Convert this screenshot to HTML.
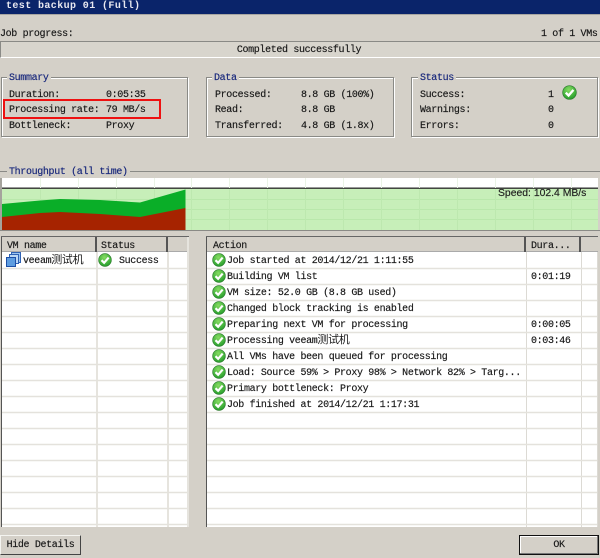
<!DOCTYPE html>
<html><head><meta charset="utf-8">
<style>
html,body{margin:0;padding:0;width:600px;height:558px;overflow:hidden;background:#d4d0c8}
#p{position:absolute;left:0;top:0;width:600px;height:558px;overflow:hidden;background:#d4d0c8;font-family:"Liberation Mono","Noto Sans CJK SC",monospace;font-size:10px;letter-spacing:-.35px;color:#161616;-webkit-text-stroke:.15px #161616}
#p div{position:absolute;box-sizing:border-box}
.t{white-space:nowrap;line-height:12px;height:12px}
.l{color:#14247a;background:#d4d0c8;padding:0 2px;-webkit-text-stroke:.15px #14247a}
.g{border:1px solid #8a8a86;box-shadow:1px 1px 0 #fff, inset 1px 1px 0 #fff}
.c{font-size:11px;line-height:0;font-family:"Noto Sans CJK SC","Liberation Sans",sans-serif;-webkit-text-stroke:0}
.h{background:#e6e4de}
svg{position:absolute}
.b{background:#d4d0c8;text-align:center;line-height:12px;padding-top:4px}
</style></head><body>
<div id="p">
<svg width="0" height="0" style="left:0;top:0"><defs>
<radialGradient id="gr" cx="45%" cy="30%" r="75%"><stop offset="0" stop-color="#86dc62"/><stop offset="1" stop-color="#1f9a28"/></radialGradient>
<symbol id="k" viewBox="0 0 16 16"><circle cx="8" cy="8" r="7.3" fill="url(#gr)" stroke="#2d7a2d" stroke-width=".7"/><path d="M4 8.2L7 11.2L12.2 5.2" fill="none" stroke="#fff" stroke-width="2.500"/></symbol>
</defs></svg>

<div style="left:0;top:0;width:600px;height:14px;background:#0a246a"></div>
<div style="left:0;top:14px;width:600px;height:1px;background:#a8a6a2"></div>
<div class="t" style="left:6px;top:0px;color:#e8e8f0;font-weight:bold;letter-spacing:.4px;-webkit-text-stroke:0;top:1px">test backup 01 (Full)</div>

<div class="t" style="left:0;top:29px">Job progress:</div>
<div class="t" style="left:541px;top:29px">1 of 1 VMs</div>
<div style="left:0;top:41px;width:600px;height:17px;background:#d8d5cd;border-top:1px solid #8a8a86;border-left:1px solid #8a8a86;border-bottom:1px solid #fff"></div>
<div class="t" style="left:0;top:45px;width:598px;text-align:center">Completed successfully</div>

<div class="g" style="left:1px;top:77px;width:187px;height:60px"></div>
<div class="t l" style="left:7px;top:73px">Summary</div>
<div class="t" style="left:9px;top:90px">Duration:</div><div class="t" style="left:106px;top:90px">0:05:35</div>
<div class="t" style="left:9px;top:105px">Processing rate:</div><div class="t" style="left:106px;top:105px">79 MB/s</div>
<div class="t" style="left:9px;top:121px">Bottleneck:</div><div class="t" style="left:106px;top:121px">Proxy</div>
<div style="left:3px;top:99px;width:158px;height:20px;border:2px solid #ee1111"></div>

<div class="g" style="left:206px;top:77px;width:188px;height:60px"></div>
<div class="t l" style="left:212px;top:73px">Data</div>
<div class="t" style="left:215px;top:90px">Processed:</div><div class="t" style="left:301px;top:90px">8.8 GB (100%)</div>
<div class="t" style="left:215px;top:105px">Read:</div><div class="t" style="left:301px;top:105px">8.8 GB</div>
<div class="t" style="left:215px;top:121px">Transferred:</div><div class="t" style="left:301px;top:121px">4.8 GB (1.8x)</div>

<div class="g" style="left:411px;top:77px;width:187px;height:60px"></div>
<div class="t l" style="left:418px;top:73px">Status</div>
<div class="t" style="left:420px;top:90px">Success:</div><div class="t" style="left:548px;top:90px">1</div>
<div class="t" style="left:420px;top:105px">Warnings:</div><div class="t" style="left:548px;top:105px">0</div>
<div class="t" style="left:420px;top:121px">Errors:</div><div class="t" style="left:548px;top:121px">0</div>
<svg style="left:562px;top:85px" width="15" height="15"><use href="#k" width="15" height="15"/></svg>

<div style="left:0;top:171px;width:600px;height:1px;background:#8a8a86"></div>
<div class="t l" style="left:7px;top:167px">Throughput (all time)</div>

<svg style="left:0;top:176px" width="600" height="56">
<rect x="0" y="0" width="600" height="56" fill="#d4d0c8"/>
<rect x="2" y="2" width="596" height="10" fill="#fff"/>
<rect x="2" y="12" width="596" height="42" fill="#c7efb9"/>
<rect x="2" y="11.5" width="596" height="1.4" fill="#333"/>
<g stroke="#b9e8ab" stroke-width="1"><path d="M2 23.5H598M2 33.5H598M2 43.5H598"/></g>
<g stroke="#eaf3e6" stroke-width="1"><path d="M40.5 2V12M78.5 2V12M116.5 2V12M154.5 2V12M191.5 2V12M229.5 2V12M267.5 2V12M305.5 2V12M343.5 2V12M381.5 2V12M419.5 2V12M457.5 2V12M495.5 2V12M533.5 2V12M571.5 2V12"/></g>
<g stroke="#bde8af" stroke-width="1"><path d="M40.5 13V54M78.5 13V54M116.5 13V54M154.5 13V54M191.5 13V54M229.5 13V54M267.5 13V54M305.5 13V54M343.5 13V54M381.5 13V54M419.5 13V54M457.5 13V54M495.5 13V54M533.5 13V54M571.5 13V54"/></g>
<path d="M2 28L40 24.5L60 23L100 24L140 26.5L185.500 13.500V54H2Z" fill="#0aae28"/>
<path d="M2 41L40 37L60 36L100 38L140 41L185.500 32V54H2Z" fill="#a62300"/>
<rect x="0" y="54" width="600" height="1" fill="#8a8a86"/>
<rect x="0" y="2" width="2" height="52" fill="#a5a39d"/>
</svg>
<div style="left:498px;top:187px;font:10.4px/13px 'Liberation Sans',sans-serif;letter-spacing:0;color:#222;white-space:nowrap">Speed: 102.4 MB/s</div>

<!-- left table -->
<div style="left:1px;top:236px;width:188px;height:291px;background:#fff"></div>
<div style="left:1px;top:236px;width:1px;height:291px;background:#555"></div>
<div style="left:1px;top:236px;width:188px;height:1px;background:#666"></div>
<div style="left:2px;top:237px;width:187px;height:15px;background:#d4d0c8;border-bottom:1px solid #aaa"></div>
<div style="left:95px;top:237px;width:2px;height:15px;background:#555"></div>
<div style="left:166px;top:237px;width:2px;height:15px;background:#555"></div>
<div class="t" style="left:7px;top:241px">VM name</div>
<div class="t" style="left:101px;top:241px">Status</div>
<div class="h" style="left:96px;top:252px;width:2px;height:275px"></div>
<div class="h" style="left:167px;top:252px;width:2px;height:275px"></div>
<div class="h" style="left:187px;top:237px;width:2px;height:290px"></div>

<!-- right table -->
<div style="left:206px;top:236px;width:392px;height:291px;background:#fff"></div>
<div style="left:206px;top:236px;width:1px;height:291px;background:#555"></div>
<div style="left:206px;top:236px;width:392px;height:1px;background:#666"></div>
<div style="left:207px;top:237px;width:391px;height:15px;background:#d4d0c8;border-bottom:1px solid #aaa"></div>
<div style="left:524px;top:237px;width:2px;height:15px;background:#555"></div>
<div style="left:579px;top:237px;width:2px;height:15px;background:#555"></div>
<div class="t" style="left:213px;top:241px">Action</div>
<div class="t" style="left:531px;top:241px">Dura...</div>
<div class="h" style="left:526px;top:252px;width:1px;height:275px;background:#dcdad4"></div>
<div class="h" style="left:581px;top:252px;width:1px;height:275px;background:#dcdad4"></div>
<div class="h" style="left:597px;top:252px;width:1px;height:275px;background:#dcdad4"></div>

<!-- row lines -->
<svg style="left:0;top:252px" width="600" height="276">
<g stroke="#e4e2dc" stroke-width="1.500" fill="none">
<path d="M2 16.500H187M207 16.500H597M2 32.500H187M207 32.500H597M2 48.500H187M207 48.500H597M2 64.500H187M207 64.500H597M2 80.500H187M207 80.500H597M2 96.500H187M207 96.500H597M2 112.500H187M207 112.500H597M2 128.500H187M207 128.500H597M2 144.500H187M207 144.500H597M2 160.500H187M207 160.500H597M2 176.500H187M207 176.500H597M2 192.500H187M207 192.500H597M2 208.500H187M207 208.500H597M2 224.500H187M207 224.500H597M2 240.500H187M207 240.500H597M2 256.500H187M207 256.500H597M2 272.500H187M207 272.500H597"/>
</g></svg>

<!-- left row -->
<svg style="left:5px;top:252px" width="16" height="16">
<rect x="6.500" y=".5" width="9" height="10" fill="#9cc4ee" stroke="#2f62b4"/>
<rect x="4.500" y="2.500" width="9" height="9" fill="#bcd8f5" stroke="#2f62b4"/>
<rect x="1.500" y="5.500" width="9" height="9" fill="#5e9de0" stroke="#1d4fa6"/>
</svg>
<div class="t" style="left:23px;top:256px">veeam<span class="c">测试机</span></div>
<svg style="left:98px;top:253px" width="14" height="14"><use href="#k" width="14" height="14"/></svg>
<div class="t" style="left:119px;top:256px">Success</div>

<!-- right rows -->
<svg style="left:212px;top:253px" width="15" height="160">
<use href="#k" y="0" width="14" height="14"/><use href="#k" y="16" width="14" height="14"/><use href="#k" y="32" width="14" height="14"/><use href="#k" y="48" width="14" height="14"/><use href="#k" y="64" width="14" height="14"/><use href="#k" y="80" width="14" height="14"/><use href="#k" y="96" width="14" height="14"/><use href="#k" y="112" width="14" height="14"/><use href="#k" y="128" width="14" height="14"/><use href="#k" y="144" width="14" height="14"/>
</svg>
<div class="t" style="left:227px;top:256px">Job started at 2014/12/21 1:11:55</div>
<div class="t" style="left:227px;top:272px">Building VM list</div>
<div class="t" style="left:227px;top:288px">VM size: 52.0 GB (8.8 GB used)</div>
<div class="t" style="left:227px;top:304px">Changed block tracking is enabled</div>
<div class="t" style="left:227px;top:320px">Preparing next VM for processing</div>
<div class="t" style="left:227px;top:336px">Processing veeam<span class="c">测试机</span></div>
<div class="t" style="left:227px;top:352px">All VMs have been queued for processing</div>
<div class="t" style="left:227px;top:368px">Load: Source 59% &gt; Proxy 98% &gt; Network 82% &gt; Targ...</div>
<div class="t" style="left:227px;top:384px">Primary bottleneck: Proxy</div>
<div class="t" style="left:227px;top:400px">Job finished at 2014/12/21 1:17:31</div>
<div class="t" style="left:531px;top:272px">0:01:19</div>
<div class="t" style="left:531px;top:320px">0:00:05</div>
<div class="t" style="left:531px;top:336px">0:03:46</div>

<!-- buttons -->
<div class="b" style="left:0;top:535px;width:81px;height:20px;border:1px solid;border-color:#f4f4f0 #444 #444 #f4f4f0">Hide Details</div>
<div class="b" style="left:519px;top:535px;width:80px;height:20px;border:1px solid #111;box-shadow:inset -1px -1px 0 #777,inset 1px 1px 0 #fff">OK</div>
</div>
</body></html>
